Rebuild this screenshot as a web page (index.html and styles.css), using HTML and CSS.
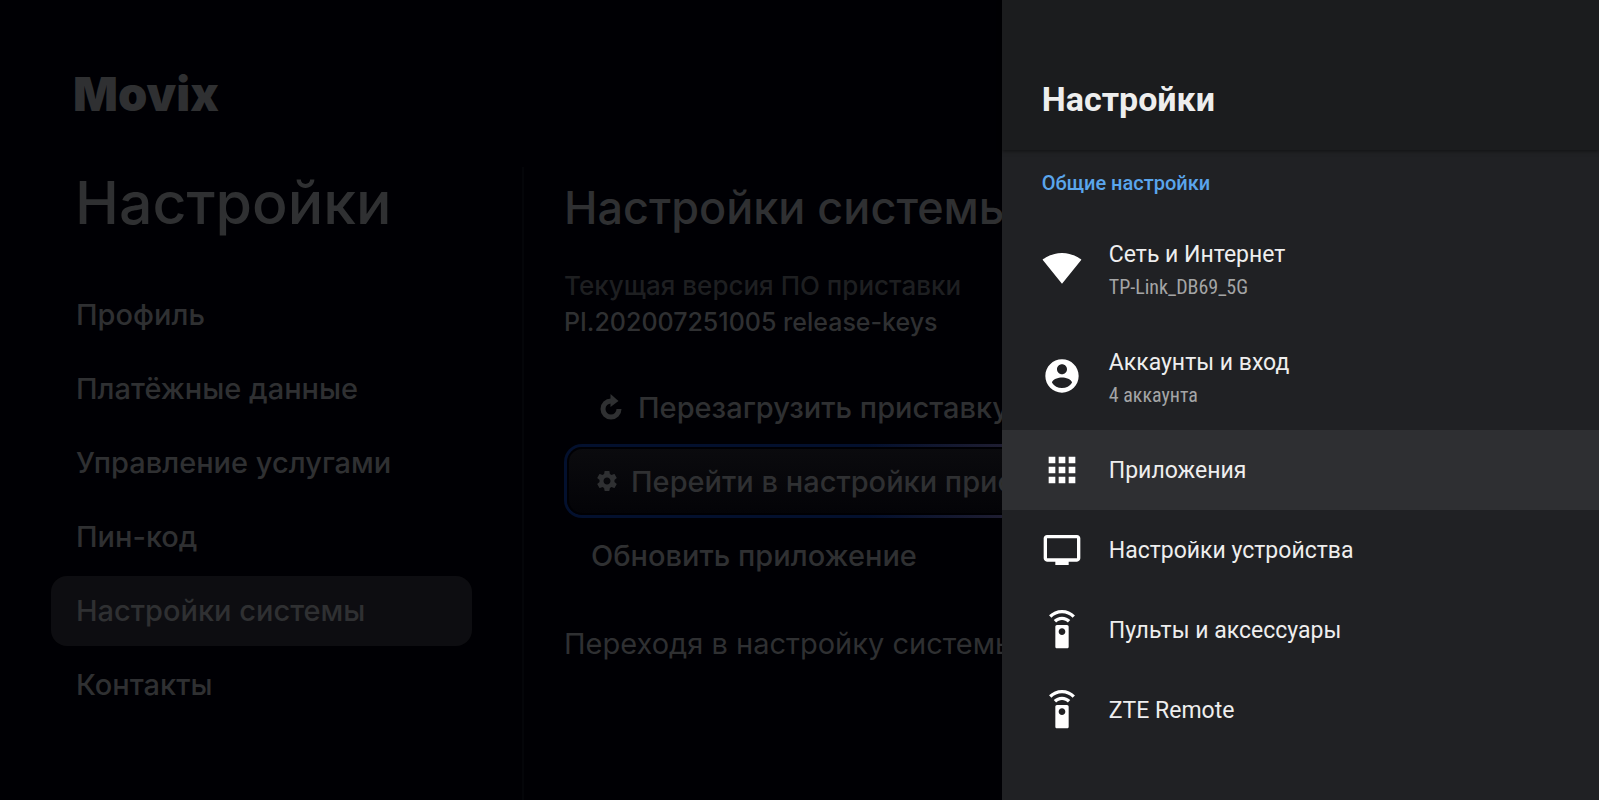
FILE: index.html
```html
<!DOCTYPE html>
<html lang="ru">
<head>
    <meta charset="UTF-8">
    <meta name="viewport" content="width=device-width, initial-scale=1.0">
    <title>Movix - Настройки</title>
    <link rel="stylesheet" href="styles.css">
</head>
<body>
    <div class="app">
        <div class="sidebar">
            <div class="logo">Movix</div>
            <h1>Настройки</h1>
            <nav class="menu">
                <a href="#profile">Профиль</a>
                <a href="#payment">Платёжные данные</a>
                <a href="#services">Управление услугами</a>
                <a href="#pin">Пин-код</a>
                <a href="#system" class="active">Настройки системы</a>
                <a href="#contacts">Контакты</a>
            </nav>
        </div>

        <main class="content">
            <h2>Настройки системы</h2>
            <p class="version-label">Текущая версия ПО приставки</p>
            <p class="version">PI.202007251005 release-keys</p>
            <div class="actions">
                <button class="action reboot">
                    <svg width="22" height="26" viewBox="0 0 22 26">
                        <path d="M11 7a8 8 0 1 0 8 8" fill="none" stroke="currentColor" stroke-width="5"/>
                        <path d="M10.5 0L18.5 7L10.5 13z" fill="currentColor"/>
                    </svg>
                    Перезагрузить приставку
                </button>
                <button class="action focused">
                    <svg width="20" height="20" viewBox="2 2 20 20">
                        <path fill="currentColor" d="M19.43 12.98c.04-.32.07-.64.07-.98s-.03-.66-.07-.98l2.11-1.65c.19-.15.24-.42.12-.64l-2-3.46c-.12-.22-.39-.3-.61-.22l-2.49 1c-.52-.4-1.08-.73-1.69-.98l-.38-2.65C14.46 2.18 14.25 2 14 2h-4c-.25 0-.46.18-.49.42l-.38 2.65c-.61.25-1.17.59-1.69.98l-2.49-1c-.23-.09-.49 0-.61.22l-2 3.46c-.13.22-.07.49.12.64l2.11 1.65c-.04.32-.07.65-.07.98s.03.66.07.98l-2.11 1.65c-.19.15-.24.42-.12.64l2 3.46c.12.22.39.3.61.22l2.49-1c.52.4 1.08.73 1.69.98l.38 2.65c.03.24.24.42.49.42h4c.25 0 .46-.18.49-.42l.38-2.65c.61-.25 1.17-.59 1.69-.98l2.49 1c.23.09.49 0 .61-.22l2-3.46c.12-.22.07-.49-.12-.64l-2.11-1.65zM12 15.5c-1.93 0-3.5-1.57-3.5-3.5s1.57-3.5 3.5-3.5 3.5 1.57 3.5 3.5-1.57 3.5-3.5 3.5z"/>
                    </svg>
                    Перейти в настройки приставки
                </button>
                <button class="action">Обновить приложение</button>
            </div>
            <p class="note">Переходя в настройку системы</p>
        </main>
    </div>

    <aside class="drawer">
        <header class="drawer-header">
            <h2>Настройки</h2>
        </header>
        <h3>Общие настройки</h3>
        <a href="#network" class="item tall">
            <svg class="icon" viewBox="0 0 24 24"><path d="M12.01 21.49L23.64 7c-.45-.34-4.93-4-11.64-4C5.28 3 .81 6.66.36 7l11.63 14.49.01.01.01-.01z"/></svg>
            <span class="text">
                <span class="title">Сеть и Интернет</span>
                <span class="summary">TP-Link_DB69_5G</span>
            </span>
        </a>
        <a href="#accounts" class="item tall">
            <svg class="icon" viewBox="0 0 24 24"><path d="M12 2C6.48 2 2 6.48 2 12s4.48 10 10 10 10-4.48 10-10S17.52 2 12 2zm0 3c1.66 0 3 1.34 3 3s-1.34 3-3 3-3-1.34-3-3 1.34-3 3-3zm0 14.2c-2.5 0-4.71-1.28-6-3.22.03-1.99 4-3.08 6-3.08 1.99 0 5.97 1.09 6 3.08-1.29 1.94-3.5 3.22-6 3.22z"/></svg>
            <span class="text">
                <span class="title">Аккаунты и вход</span>
                <span class="summary">4 аккаунта</span>
            </span>
        </a>
        <a href="#apps" class="item selected">
            <svg class="icon" viewBox="0 0 24 24"><path d="M4 8h4V4H4v4zm6 12h4v-4h-4v4zm-6 0h4v-4H4v4zm0-6h4v-4H4v4zm6 0h4v-4h-4v4zm6-10v4h4V4h-4zm-6 4h4V4h-4v4zm6 6h4v-4h-4v4zm0 6h4v-4h-4v4z"/></svg>
            <span class="title">Приложения</span>
        </a>
        <a href="#device" class="item">
            <svg class="icon" viewBox="0 0 24 24"><path d="M21 3H3c-1.1 0-2 .9-2 2v12c0 1.1.9 2 2 2h5v2h8v-2h5c1.1 0 2-.9 2-2V5c0-1.1-.9-2-2-2zm0 14H3V5h18v12z"/></svg>
            <span class="title">Настройки устройства</span>
        </a>
        <a href="#remotes" class="item">
            <svg class="icon" viewBox="0 0 24 24"><path d="M15 9H9c-.55 0-1 .45-1 1v12c0 .55.45 1 1 1h6c.55 0 1-.45 1-1V10c0-.55-.45-1-1-1zm-3 6c-1.1 0-2-.9-2-2s.9-2 2-2 2 .9 2 2-.9 2-2 2zM7.05 6.05l1.41 1.41C9.37 6.56 10.62 6 12 6s2.63.56 3.54 1.46l1.41-1.41C15.68 4.78 13.93 4 12 4s-3.68.78-4.95 2.05zM12 0C8.96 0 6.21 1.23 4.22 3.22l1.41 1.41C7.26 3.01 9.51 2 12 2s4.74 1.01 6.36 2.64l1.41-1.41C17.79 1.23 15.04 0 12 0z"/></svg>
            <span class="title">Пульты и аксессуары</span>
        </a>
        <a href="#zte" class="item">
            <svg class="icon" viewBox="0 0 24 24"><path d="M15 9H9c-.55 0-1 .45-1 1v12c0 .55.45 1 1 1h6c.55 0 1-.45 1-1V10c0-.55-.45-1-1-1zm-3 6c-1.1 0-2-.9-2-2s.9-2 2-2 2 .9 2 2-.9 2-2 2zM7.05 6.05l1.41 1.41C9.37 6.56 10.62 6 12 6s2.63.56 3.54 1.46l1.41-1.41C15.68 4.78 13.93 4 12 4s-3.68.78-4.95 2.05zM12 0C8.96 0 6.21 1.23 4.22 3.22l1.41 1.41C7.26 3.01 9.51 2 12 2s4.74 1.01 6.36 2.64l1.41-1.41C17.79 1.23 15.04 0 12 0z"/></svg>
            <span class="title">ZTE Remote</span>
        </a>
    </aside>
</body>
</html>
```

FILE: styles.css
```css
* {
    box-sizing: border-box;
}
body {
    margin: 0;
    min-height: 100vh;
    display: flex;
    background-color: #000004;
    color: #2f3032;
    font-family: Inter, "Open Sans", sans-serif;
}
h1, h2, h3, p {
    margin: 0;
    font-weight: 500;
    white-space: nowrap;
}
a {
    color: inherit;
    text-decoration: none;
}

/* dimmed Movix screen */
.app {
    flex: 1;
    min-width: 0;
    display: flex;
    overflow: hidden;
}
.sidebar {
    flex: 0 0 522px;
    padding: 64px 50px 0 51px;
}
.logo {
    padding-left: 22px;
    font-size: 47px;
    line-height: 60px;
    font-weight: 900;
}
.sidebar h1 {
    margin-top: 39px;
    padding-left: 24px;
    font-size: 59px;
    line-height: 80px;
}
.menu {
    display: flex;
    flex-direction: column;
    gap: 4px;
    margin-top: 37px;
}
.menu a {
    padding-left: 25px;
    border-radius: 16px;
    font-size: 29px;
    line-height: 70px;
    font-weight: 500;
    white-space: nowrap;
}
.menu .active {
    background-color: #0d0d11;
}
.content {
    flex: 1;
    min-width: 0;
    margin-top: 167px;
    padding: 11px 0 0 40px;
    border-left: 2px solid #040509;
}
.content h2 {
    font-size: 45px;
    line-height: 60px;
}
.version-label,
.version {
    font-size: 26px;
    line-height: 36px;
}
.version-label {
    margin-top: 30px;
    color: #1e1f21;
}
.version {
    font-size: 25px;
}
.actions {
    display: flex;
    flex-direction: column;
    width: 800px;
    margin-top: 30px;
}
.action {
    display: flex;
    align-items: center;
    gap: 16px;
    height: 74px;
    padding: 0 24px;
    border: 3px solid transparent;
    border-radius: 18px;
    background: none;
    color: inherit;
    font-family: inherit;
    font-size: 29px;
    font-weight: 500;
    white-space: nowrap;
}
.reboot {
    padding-left: 33px;
}
.focused {
    gap: 14px;
    padding-left: 30px;
    background:
        linear-gradient(#0b0b0e, #030307) padding-box,
        linear-gradient(90deg, #03102e 38%, #2a2333 62%) border-box;
    box-shadow: inset 0 0 0 2px #000004;
}
.note {
    margin-top: 32px;
    font-size: 29px;
    line-height: 40px;
    font-weight: 400;
}

/* system settings drawer */
.drawer {
    flex: 0 0 37.35%;
    background-color: #202124;
    color: #eeeeee;
    font-family: Roboto, sans-serif;
}
.drawer-header {
    padding: 74px 40px 26px;
    background-color: #1b1c1e;
    box-shadow: 0 1px 4px rgba(0, 0, 0, 0.5);
}
.drawer h2 {
    font-size: 34px;
    line-height: 50px;
    font-weight: 700;
}
.drawer h3 {
    padding: 2px 40px 0;
    font-size: 20px;
    line-height: 62px;
    color: #5aa5ec;
}
.item {
    display: flex;
    align-items: center;
    gap: 27px;
    height: 80px;
    padding: 0 40px;
    white-space: nowrap;
}
.item.tall {
    height: 108px;
}
.selected {
    background-color: #2e2f32;
}
.icon {
    width: 40px;
    height: 40px;
    fill: #ffffff;
}
.text {
    display: flex;
    flex-direction: column;
    padding-top: 6px;
}
.title {
    font-size: 23px;
    line-height: 33px;
}
.summary {
    color: #a4a5a6;
    font-family: "Roboto Condensed", Roboto, sans-serif;
    font-size: 20px;
    line-height: 33px;
}
```
